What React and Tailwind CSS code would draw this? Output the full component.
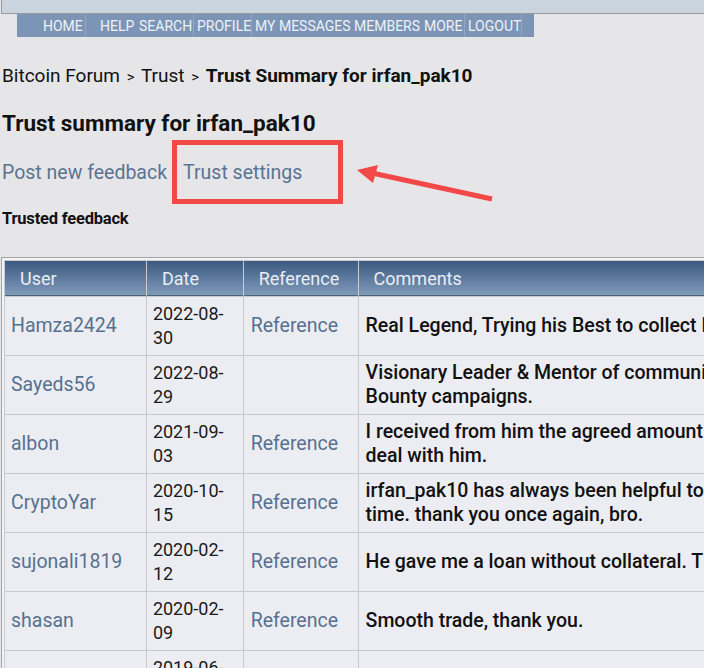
import React from 'react';

const menu = [
  { label: '', w: 'w-[23px]', sep: false },
  { label: 'HOME', w: 'w-[46px]', sep: true },
  { label: 'HELP', w: 'w-[50px] pl-[14px]', sep: false },
  { label: 'SEARCH', w: 'w-[58px]', sep: true },
  { label: 'PROFILE', w: 'w-[58px]', sep: true },
  { label: 'MY MESSAGES', w: 'w-[99px]', sep: false },
  { label: 'MEMBERS', w: 'w-[70px]', sep: false },
  { label: 'MORE', w: 'w-[44px]', sep: true },
  { label: 'LOGOUT', w: 'w-[57px]', sep: true },
  { label: '', w: 'w-[12px]', sep: false },
];

const rows = [
  {
    user: 'Hamza2424',
    date: ['2022-08-', '30'],
    ref: true,
    comment: ['Real Legend, Trying his Best to collect Data for the community projects.'],
  },
  {
    user: 'Sayeds56',
    date: ['2022-08-', '29'],
    ref: false,
    comment: ['Visionary Leader & Mentor of community, honest manager of', 'Bounty campaigns.'],
  },
  {
    user: 'albon',
    date: ['2021-09-', '03'],
    ref: true,
    comment: ['I received from him the agreed amount in time. It was a pleasure to', 'deal with him.'],
  },
  {
    user: 'CryptoYar',
    date: ['2020-10-', '15'],
    ref: true,
    comment: ['irfan_pak10 has always been helpful to me and paid me on', 'time. thank you once again, bro.'],
  },
  {
    user: 'sujonali1819',
    date: ['2020-02-', '12'],
    ref: true,
    comment: ['He gave me a loan without collateral. Thanks a lot.'],
  },
  {
    user: 'shasan',
    date: ['2020-02-', '09'],
    ref: true,
    comment: ['Smooth trade, thank you.'],
  },
  {
    user: 'Mr.Rocky',
    date: ['2019-06-', '21'],
    ref: true,
    comment: ['Trusted person, fast and fair deal.'],
  },
];

function Arrow() {
  return (
    <svg className="absolute left-0 top-0 pointer-events-none" width="704" height="260" viewBox="0 0 704 260">
      <line x1="492" y1="199" x2="372" y2="173" stroke="#f24848" strokeWidth="5" />
      <polygon points="357,170 378,165 373,183" fill="#f24848" />
    </svg>
  );
}

export default function App() {
  return (
    <div className="relative h-[668px] w-[704px] overflow-hidden bg-[#e6e6e9] font-['Roboto',sans-serif] text-[#111]">
      {/* top box */}
      <div className="h-[14px] ml-[1px] border-l border-b border-[#999aa0] bg-[#c9d4df]" />

      {/* menu bar */}
      <div className="ml-[17px] flex h-[23px] w-[517px] bg-[#7c95b6]">
        {menu.map((m, i) => (
          <div
            key={i}
            className={`${m.w} ${m.sep ? 'border-r border-[#93a7c1]' : ''} flex items-center pl-[3px] text-[14px] leading-none text-[#eef2f7] whitespace-nowrap`}
          >
            {m.label}
          </div>
        ))}
      </div>

      <div className="pl-[2px]">
        <div className="mt-[27px] text-[19px] leading-[24px] whitespace-nowrap">
          Bitcoin Forum <span className="mx-[2px] text-[15px]">&gt;</span> Trust <span className="mx-[2px] text-[15px]">&gt;</span>{' '}
          <span className="font-bold">Trust Summary for irfan_pak10</span>
        </div>

        <h1 className="mt-[20px] text-[22.5px] leading-[28px] font-bold">Trust summary for irfan_pak10</h1>

        <div className="mt-[22px] flex gap-[16px] text-[19.5px] leading-[28px] text-[#5b7391]">
          <span>Post new feedback</span>
          <span>Trust settings</span>
        </div>

        <div className="mt-[22px] text-[16.5px] leading-[20px] font-bold tracking-[-0.2px]">Trusted feedback</div>
      </div>

      {/* table */}
      <div className="mt-[28px] ml-[1px] w-[1100px] border-l border-t border-[#a3a3a8] bg-[#f3f3f5] p-[2px]">
        <table className="table-fixed border-separate border-spacing-[1px] bg-[#c9cacf] text-[18px]">
          <colgroup>
            <col className="w-[141px]" />
            <col className="w-[96px]" />
            <col className="w-[114px]" />
            <col className="w-[740px]" />
          </colgroup>
          <thead>
            <tr>
              {['User', 'Date', 'Reference', 'Comments'].map((h) => (
                <th
                  key={h}
                  className="h-[35px] border-b border-[#4f6079] bg-gradient-to-b from-[#3c5a80] to-[#809ab9] pl-[15px] text-left font-normal text-[#e9eef5]"
                >
                  {h}
                </th>
              ))}
            </tr>
          </thead>
          <tbody>
            {rows.map((r) => (
              <tr key={r.user} className="bg-[#ecedf2]">
                <td className="h-[58px] px-[6px] py-[5px] align-middle text-[19.5px] leading-[24px] text-[#56718f]">{r.user}</td>
                <td className="px-[6px] py-[5px] align-middle leading-[24px] text-[#1a1a1a]">
                  {r.date[0]}
                  <br />
                  {r.date[1]}
                </td>
                <td className="px-[7px] py-[5px] align-middle text-[19.5px] leading-[24px] text-[#56718f]">
                  {r.ref ? 'Reference' : ''}
                </td>
                <td className="px-[7px] py-[5px] align-middle text-[19.5px] font-medium leading-[24px] whitespace-nowrap text-[#111]">
                  {r.comment.map((c, i) => (
                    <div key={i}>{c}</div>
                  ))}
                </td>
              </tr>
            ))}
          </tbody>
        </table>
      </div>

      {/* annotation */}
      <div className="absolute left-[172px] top-[140px] h-[64px] w-[171px] border-[5px] border-[#f24848]" />
      <Arrow />
    </div>
  );
}
